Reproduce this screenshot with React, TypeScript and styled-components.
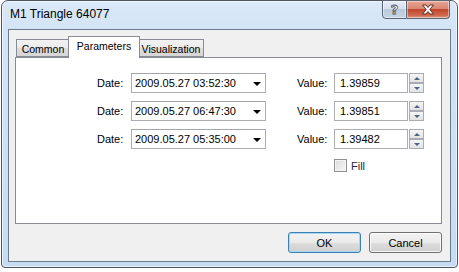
import React from 'react'
import styled, { createGlobalStyle } from 'styled-components'

const GlobalStyle = createGlobalStyle`
  html, body {
    margin: 0;
    padding: 0;
    background: #ffffff;
  }
  body {
    font-family: "Liberation Sans", Arial, sans-serif;
    font-size: 11px;
    color: #000;
  }
`

const Window = styled.div`
  box-sizing: border-box;
  width: 457px;
  height: 268px;
  margin: 0 0 0 1px;
  border: 1px solid #50565e;
  border-radius: 7px 7px 4px 4px;
  background: linear-gradient(to bottom, #dbe9f8 0px, #d3e4f6 28px, #c6dcf3 100%);
  display: flex;
  flex-direction: column;
  padding: 0 6px 5px 6px;
  box-shadow: inset 0 0 0 1px rgba(255, 255, 255, 0.6);
`

const TitleBar = styled.div`
  height: 28px;
  display: flex;
  align-items: flex-start;
  justify-content: space-between;
`

const Title = styled.div`
  font-family: "Liberation Sans", Arial, sans-serif;
  font-size: 12px;
  color: #000;
  padding: 6px 0 0 2px;
`

const CaptionGroup = styled.div`
  display: flex;
  margin-top: -1px;
  margin-right: 1px;
`

const CaptionButton = styled.div<{ $close?: boolean }>`
  box-sizing: border-box;
  width: ${p => (p.$close ? '43px' : '25px')};
  height: 19px;
  border: 1px solid #5a6676;
  border-left-width: ${p => (p.$close ? '0' : '1px')};
  border-radius: ${p => (p.$close ? '0 0 4px 0' : '0 0 0 4px')};
  background: ${p =>
    p.$close
      ? 'linear-gradient(to bottom, #e8a493 0%, #d98872 45%, #c2452c 50%, #cf6a4f 85%, #dc9b83 100%)'
      : 'linear-gradient(to bottom, #e6eef7 0%, #d6e1ee 45%, #bac9db 50%, #c7d5e6 100%)'};
  display: flex;
  align-items: center;
  justify-content: center;
  box-shadow: inset 0 0 0 1px rgba(255, 255, 255, 0.45);
`

const HelpGlyph = styled.span`
  font-family: "DejaVu Sans", sans-serif;
  font-weight: bold;
  font-size: 13px;
  color: #ffffff;
  -webkit-text-stroke: 0.8px #3d4a5b;
  line-height: 1;
`

const Client = styled.div`
  flex: 1;
  box-sizing: border-box;
  border: 1px solid #6b7a8c;
  background: #f0f0f0;
  padding: 5px 7px 0 6px;
  display: flex;
  flex-direction: column;
`

const TabStrip = styled.div`
  display: flex;
  align-items: flex-end;
  height: 22px;
  padding-left: 1px;
  position: relative;
  z-index: 1;
`

const Tab = styled.div<{ $active?: boolean; $w: number }>`
  box-sizing: border-box;
  width: ${p => p.$w}px;
  height: ${p => (p.$active ? '22px' : '18px')};
  margin: ${p => (p.$active ? '0 -2px -1px -2px' : '0')};
  border: 1px solid #898c95;
  border-bottom: ${p => (p.$active ? 'none' : '1px solid #898c95')};
  background: ${p =>
    p.$active ? '#ffffff' : 'linear-gradient(to bottom, #f2f2f2 0%, #ebebeb 50%, #dddddd 51%, #d6d6d6 100%)'};
  display: flex;
  align-items: ${p => (p.$active ? 'flex-start' : 'center')};
  justify-content: center;
  padding-top: ${p => (p.$active ? '3px' : '1px')};
  font-size: 10.5px;
  white-space: nowrap;
  position: relative;
  z-index: ${p => (p.$active ? 2 : 1)};
`

const Panel = styled.div`
  box-sizing: border-box;
  width: 427px;
  height: 167px;
  border: 1px solid #898c95;
  background: #ffffff;
  padding: 15px 0 0 81px;
  display: flex;
  flex-direction: column;
  gap: 8px;
`

const Row = styled.div`
  display: flex;
  align-items: center;
  height: 20px;
`

const Label = styled.span<{ $w: number }>`
  width: ${p => p.$w}px;
  font-size: 11px;
`

const Combo = styled.div`
  box-sizing: border-box;
  width: 135px;
  height: 20px;
  border: 1px solid #abadb3;
  border-top-color: #a3a6ad;
  background: #fff;
  display: flex;
  align-items: center;
  justify-content: space-between;
  padding: 0 3px 0 3px;
  font-size: 11px;
`

const Arrow = styled.span`
  width: 0;
  height: 0;
  border-left: 4px solid transparent;
  border-right: 4px solid transparent;
  border-top: 4px solid #000;
  margin-right: 1px;
  margin-top: 1px;
`

const ValueGroup = styled.div`
  display: flex;
  align-items: center;
  margin-left: 31px;
`

const ValueInput = styled.div`
  box-sizing: border-box;
  width: 74px;
  height: 20px;
  border: 1px solid #abadb3;
  background: #fff;
  display: flex;
  align-items: center;
  padding-left: 5px;
  font-size: 11px;
`

const Spinner = styled.div`
  display: flex;
  flex-direction: column;
  margin-left: 1px;
`

const SpinButton = styled.div<{ $down?: boolean }>`
  box-sizing: border-box;
  width: 15px;
  height: 10px;
  border: 1px solid #a9acb2;
  background: linear-gradient(to bottom, #f5f5f5, #e3e3e3);
  display: flex;
  align-items: center;
  justify-content: center;
  &::after {
    content: '';
    width: 0;
    height: 0;
    border-left: 3px solid transparent;
    border-right: 3px solid transparent;
    ${p => (p.$down ? 'border-top: 3px solid #4c6288;' : 'border-bottom: 3px solid #4c6288;')}
  }
`

const CheckRow = styled.label`
  display: flex;
  align-items: center;
  margin: 2px 0 0 237px;
  gap: 4px;
  font-size: 11px;
  color: #1b2a48;
`

const CheckBox = styled.span`
  box-sizing: border-box;
  width: 13px;
  height: 13px;
  border: 1px solid #8f8f8f;
  background: linear-gradient(135deg, #dcdcdc, #f7f7f7);
  box-shadow: inset 0 0 0 1px #f4f4f4;
`

const ButtonRow = styled.div`
  width: 427px;
  display: flex;
  justify-content: flex-end;
  gap: 8px;
  margin-top: 8px;
`

const DialogButton = styled.div<{ $default?: boolean }>`
  box-sizing: border-box;
  width: 73px;
  height: 21px;
  border: 1px solid ${p => (p.$default ? '#3c7fb1' : '#707070')};
  border-radius: 3px;
  background: linear-gradient(to bottom, #f2f2f2 0%, #ebebeb 50%, #dddddd 51%, #cfcfcf 100%);
  box-shadow: inset 0 0 0 1px ${p => (p.$default ? '#a6d8f5' : 'rgba(255,255,255,0.8)')};
  display: flex;
  align-items: center;
  justify-content: center;
  font-size: 11px;
`

const dates = ['2009.05.27 03:52:30', '2009.05.27 06:47:30', '2009.05.27 05:35:00']
const values = ['1.39859', '1.39851', '1.39482']

export default function App() {
  return (
    <>
      <GlobalStyle />
      <Window>
        <TitleBar>
          <Title>M1 Triangle 64077</Title>
          <CaptionGroup>
            <CaptionButton>
              <HelpGlyph>?</HelpGlyph>
            </CaptionButton>
            <CaptionButton $close>
              <svg width="14" height="11" viewBox="0 0 14 11">
                <path
                  d="M1.5 1 L5 1 L7 3.5 L9 1 L12.5 1 L8.8 5.5 L12.5 10 L9 10 L7 7.5 L5 10 L1.5 10 L5.2 5.5 Z"
                  fill="#ffffff"
                  stroke="#4b1f15"
                  strokeWidth="0.9"
                  strokeLinejoin="round"
                />
              </svg>
            </CaptionButton>
          </CaptionGroup>
        </TitleBar>
        <Client>
          <TabStrip>
            <Tab $w={54}>Common</Tab>
            <Tab $w={72} $active>Parameters</Tab>
            <Tab $w={66}>Visualization</Tab>
          </TabStrip>
          <Panel>
            {dates.map((d, i) => (
              <Row key={i}>
                <Label $w={34}>Date:</Label>
                <Combo>
                  <span>{d}</span>
                  <Arrow />
                </Combo>
                <ValueGroup>
                  <Label $w={37}>Value:</Label>
                  <ValueInput>{values[i]}</ValueInput>
                  <Spinner>
                    <SpinButton />
                    <SpinButton $down />
                  </Spinner>
                </ValueGroup>
              </Row>
            ))}
            <CheckRow>
              <CheckBox />
              <span>Fill</span>
            </CheckRow>
          </Panel>
          <ButtonRow>
            <DialogButton $default>OK</DialogButton>
            <DialogButton>Cancel</DialogButton>
          </ButtonRow>
        </Client>
      </Window>
    </>
  )
}
